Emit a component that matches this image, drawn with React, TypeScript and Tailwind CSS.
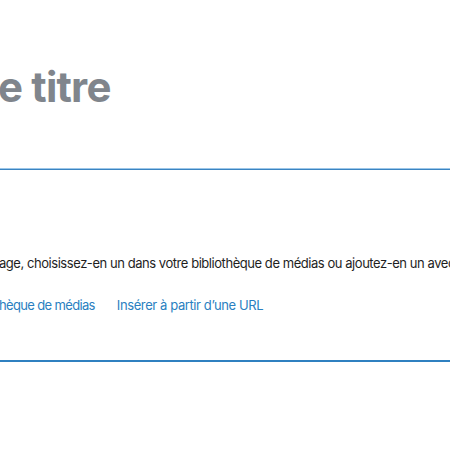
export default function App() {
  return (
    <div className="w-[450px] h-[450px] overflow-hidden bg-white font-['Inter',_'Liberation_Sans',_sans-serif]">
      <h1 className="mt-[62px] -ml-[2px] text-[42px] leading-[50px] font-bold tracking-[-0.8px] text-[#80858c] whitespace-nowrap">
        e titre
      </h1>

      <div className="mt-[56px] border-t border-[#9cc6e8] border-b border-b-[#3a84c2]" />

      <p className="mt-[83px] -ml-[1px] text-[13px] leading-[20px] tracking-[-0.45px] text-[#1e1e1e] whitespace-nowrap">
        age, choisissez-en un dans votre bibliothèque de médias ou ajoutez-en un avec une URL.
      </p>

      <div className="mt-[22px] -ml-[1px] flex gap-[22px] text-[13px] leading-[20px] tracking-[-0.4px] text-[#2a7fc1] whitespace-nowrap">
        <span className="tracking-[-0.65px]">hèque de médias</span>
        <span>Insérer à partir d’une URL</span>
      </div>

      <div className="mt-[45px] h-[2px] bg-[#2f80c0]" />
    </div>
  );
}
